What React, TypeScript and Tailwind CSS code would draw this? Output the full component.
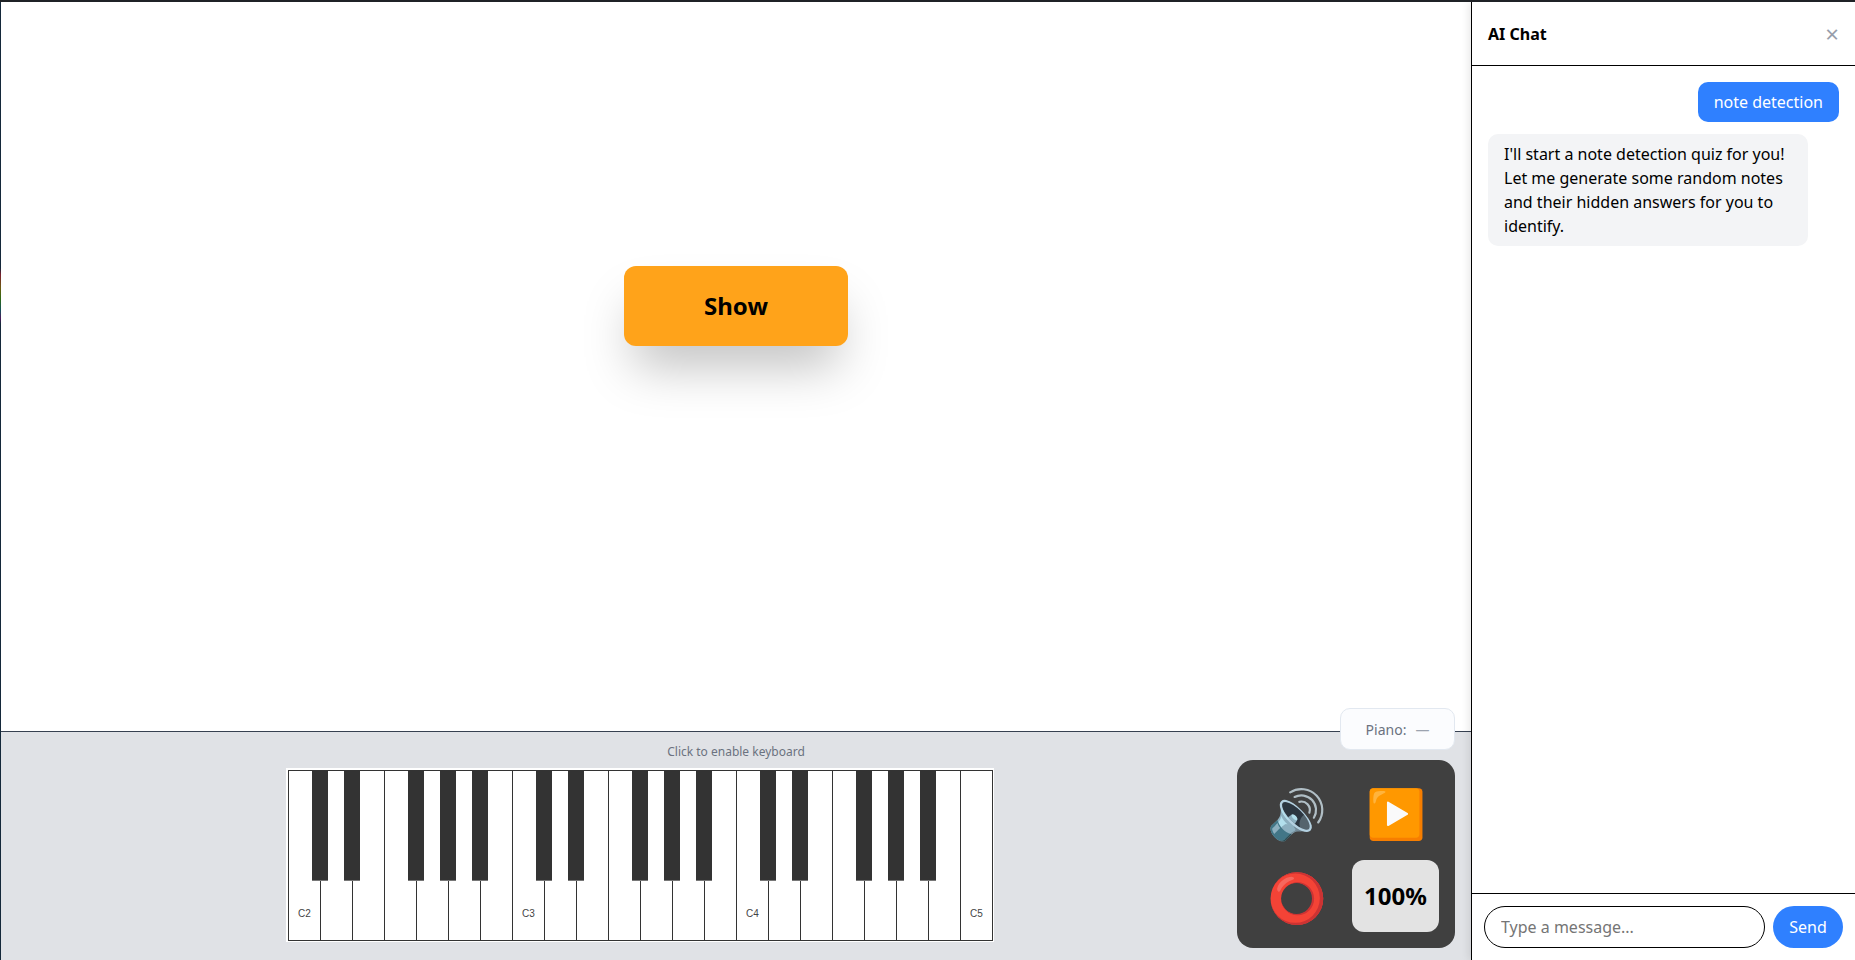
const whites = 22;
const whiteW = 32;
// black keys sit after these white indices within an octave
const blackAfter = [0, 1, 3, 4, 5];

function Piano() {
  const labels: Record<number, string> = { 0: "C2", 7: "C3", 14: "C4", 21: "C5" };
  const blacks: number[] = [];
  for (let i = 0; i < whites - 1; i++) {
    if (blackAfter.includes(i % 7)) blacks.push(i);
  }
  return (
    <div className="relative ml-[285px] h-[174px] w-[708px] bg-white p-[2px]">
      <div className="flex h-[171px] w-[705px] border border-[#333] border-r-0">
        {Array.from({ length: whites }).map((_, i) => (
          <div key={i} className="relative flex h-full w-[32px] shrink-0 items-end justify-center border-r border-[#333] pb-[19px] text-[10px] text-[#444] font-['Liberation_Sans',sans-serif]">
            {labels[i]}
          </div>
        ))}
      </div>
      {blacks.map((i) => (
        <div
          key={i}
          className="absolute top-[2px] h-[111px] w-[16px] border-b border-[#777] bg-[#333]"
          style={{ left: 2 + (i + 1) * whiteW - 8 }}
        />
      ))}
    </div>
  );
}

export default function App() {
  return (
    <div className="flex h-[960px] w-[1855px] overflow-hidden border-t-2 border-[#1f2226] bg-white font-['Noto_Sans',sans-serif] text-black">
      <div className="relative flex min-w-0 flex-1 flex-col border-l border-[#14283a]">
        <div className="absolute left-[-1px] top-[266px] h-[56px] w-[1px] bg-[linear-gradient(to_bottom,#14283a,#7a1f2e_12%,#6b5a10_35%,#2e6a14_55%,#14505a_75%,#4a1a5a_90%,#14283a)]" />
        <main className="flex h-[729px] shrink-0 items-start justify-center pt-[264px]">
          <button type="button" className="h-[80px] w-[224px] rounded-[12px] bg-[#ffa31a] text-[24px] font-bold shadow-[0_30px_50px_-10px_rgba(0,0,0,0.25)]">
            Show
          </button>
        </main>
        <div className="relative flex flex-1 flex-col border-t border-[#374151] bg-[#e0e2e6]">
          <div className="absolute right-[16px] top-[-24px] flex h-[42px] w-[115px] items-center justify-center gap-[9px] rounded-[10px] border border-[#e2e8f0] bg-[#fbfcfe] text-[14px] text-[#6b7280]">
            <span>Piano:</span>
            <span className="text-[#9ca3af]">—</span>
          </div>
          <p className="mt-[12px] mb-[8px] text-center text-[12px] leading-[16px] text-[#6b7280]">Click to enable keyboard</p>
          <Piano />
          <div className="absolute right-[16px] top-[28px] grid h-[188px] w-[218px] grid-cols-2 gap-[12px] rounded-[16px] bg-[#404040] p-[16px]">
            <button type="button" className="flex items-center justify-center pt-[1px] text-[48px] leading-none">🔊</button>
            <button type="button" className="flex items-center justify-center pt-[1px] text-[48px] leading-none">▶️</button>
            <button type="button" className="flex items-center justify-center pt-[1px] text-[48px] leading-none">⭕</button>
            <button type="button" className="flex items-center justify-center rounded-[12px] bg-[#e3e3e3] text-[24px] font-bold">100%</button>
          </div>
        </div>
      </div>
      <aside className="z-10 flex w-[384px] shrink-0 flex-col border-l border-black bg-white shadow-[-2px_0_8px_rgba(0,0,0,0.1)]">
        <header className="flex h-[64px] shrink-0 items-center justify-between border-b border-black px-[16px]">
          <h2 className="text-[16px] font-bold">AI Chat</h2>
          <button type="button" className="text-[24px] leading-none text-[#979eab]">×</button>
        </header>
        <div className="flex flex-1 flex-col gap-[12px] p-[16px]">
          <div className="self-end rounded-[10px] bg-[#2f80ff] px-[16px] py-[8px] text-[16px] leading-[24px] text-white">note detection</div>
          <div className="w-[320px] rounded-[10px] bg-[#f3f4f6] px-[16px] py-[8px] text-[16px] leading-[24px]">
            I'll start a note detection quiz for you! Let me generate some random notes and their hidden answers for you to identify.
          </div>
        </div>
        <div className="flex h-[67px] shrink-0 items-start gap-[8px] border-t border-black px-[12px] pt-[12px]">
          <input placeholder="Type a message..." className="h-[42px] w-[281px] rounded-full border border-black px-[16px] text-[16px] outline-none placeholder:text-[#757575]" />
          <button type="button" className="h-[42px] w-[70px] rounded-full bg-[#2f80ff] text-[16px] text-white">Send</button>
        </div>
      </aside>
    </div>
  );
}
